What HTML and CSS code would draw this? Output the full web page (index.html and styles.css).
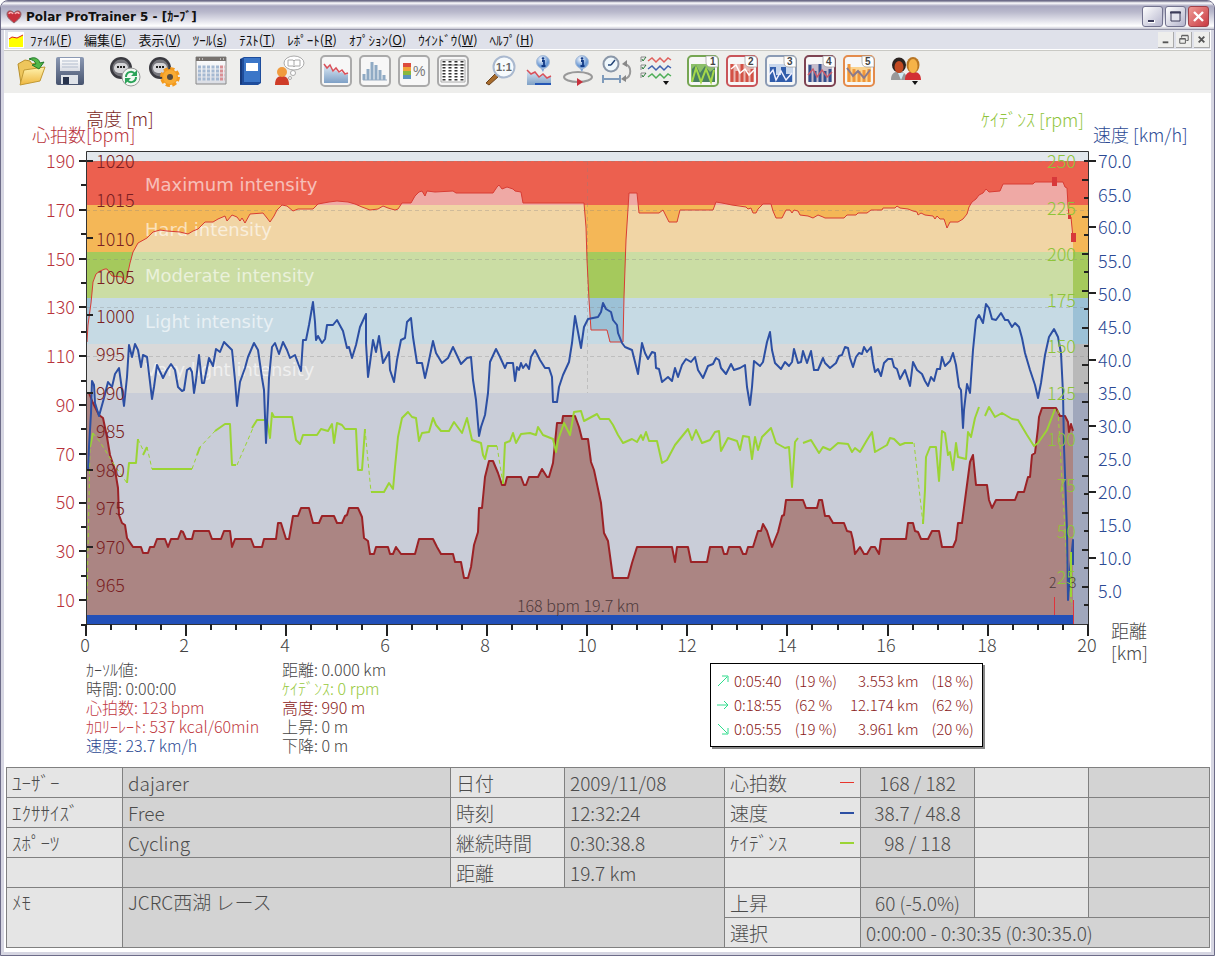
FILE: index.html
```html
<!DOCTYPE html>
<html lang="ja">
<head>
    <meta charset="UTF-8">
    <meta name="viewport" content="width=device-width, initial-scale=1.0">
    <title>Polar ProTrainer 5 - [ｶｰﾌﾞ]</title>
    <link rel="stylesheet" href="styles.css">
</head>
<body>
    <div class="window">
        <!-- Title bar -->
        <header class="titlebar">
            <svg class="app-icon" viewBox="0 0 16 16"><path d="M8 14C3 10 1 8 1 5c0-4 5-4 7-1 2-3 7-3 7 1 0 3-2 5-7 9z" fill="#c8303c" stroke="#8e6a70"/><path d="M3 5c0-2 3-2 4 0M9 5c1-2 4-2 4 0" fill="none" stroke="#f6b0b4" stroke-width="1.5"/></svg>
            <h1>Polar ProTrainer 5 - [ｶｰﾌﾞ]</h1>
            <div class="caption-buttons">
                <button type="button" aria-label="Minimize"><svg viewBox="0 0 19 19"><path d="M5 13h7v3H5z" fill="#fff"/><path d="M5 13h6v2H5z" fill="#3c3c5a"/></svg></button>
                <button type="button" aria-label="Maximize"><svg viewBox="0 0 19 19"><path d="M5 5h9v9H5z" fill="#e4e4ee" stroke="#3c3c5a"/><path d="M4 5.5h11" stroke="#3c3c5a" stroke-width="2"/></svg></button>
                <button type="button" class="close" aria-label="Close"><svg viewBox="0 0 19 19"><path d="M5 5l9 9M14 5l-9 9" stroke="#fff" stroke-width="2.4"/></svg></button>
            </div>
        </header>

        <!-- Menu -->
        <nav class="menubar">
            <svg class="doc-icon" viewBox="0 0 16 16"><path d="M0 0h16v16H0z" fill="#fff"/><path d="M1 7l3-2 5 1 6-3v12H1z" fill="#ff0"/><path d="M1 7l3-2 5 1 6-3" fill="none" stroke="#d22"/></svg>
            <button type="button">ﾌｧｲﾙ(<u>F</u>)</button>
            <button type="button">編集(<u>E</u>)</button>
            <button type="button">表示(<u>V</u>)</button>
            <button type="button">ﾂｰﾙ(<u>s</u>)</button>
            <button type="button">ﾃｽﾄ(<u>T</u>)</button>
            <button type="button">ﾚﾎﾟｰﾄ(<u>R</u>)</button>
            <button type="button">ｵﾌﾟｼｮﾝ(<u>O</u>)</button>
            <button type="button">ｳｲﾝﾄﾞｳ(<u>W</u>)</button>
            <button type="button">ﾍﾙﾌﾟ(<u>H</u>)</button>
            <div class="mdi-buttons">
                <button type="button" aria-label="Minimize document"><svg viewBox="0 0 16 16"><path d="M5 11h6" stroke="#555" stroke-width="2"/></svg></button>
                <button type="button" aria-label="Restore document"><svg viewBox="0 0 16 16"><path d="M6 6V4h7v5h-2M6 3.5h7M4 7h6v5H4zM4 7.5h6" fill="none" stroke="#555"/></svg></button>
                <button type="button" aria-label="Close document"><svg viewBox="0 0 16 16"><path d="M5 5l6 6M11 5l-6 6" stroke="#555" stroke-width="2"/></svg></button>
            </div>
        </nav>

        <!-- Toolbar -->
        <div class="toolbar">
            <svg class="defs" aria-hidden="true">
                <defs>
                    <linearGradient id="folder" x2="0" y2="1"><stop stop-color="#fff3b0"/><stop offset="1" stop-color="#eeb63e"/></linearGradient>
                    <linearGradient id="steel" x2="0" y2="1"><stop stop-color="#8c9ab4"/><stop offset="1" stop-color="#46536e"/></linearGradient>
                    <linearGradient id="paper" x2="0" y2="1"><stop stop-color="#fff"/><stop offset="1" stop-color="#dadde4"/></linearGradient>
                    <linearGradient id="sea" x2="0" y2="1"><stop stop-color="#dce9f4"/><stop offset="1" stop-color="#7ea0c6"/></linearGradient>
                    <radialGradient id="ball" cx=".4" cy=".3"><stop stop-color="#fff"/><stop offset="1" stop-color="#6d9bd6"/></radialGradient>
                    <g id="watch"><circle cx="12" cy="13" r="11" fill="#3a3a40"/><circle cx="12" cy="13" r="8.500" fill="#77777d"/><rect x="5" y="8" width="14" height="10" rx="5" fill="#d5d5d8"/><path d="M8 12h2m1 0h2m1 0h2" stroke="#222" stroke-width="2"/></g>
                    <g id="info"><path d="M14 12l3 5 2-5z" fill="#7ba3d8"/><circle cx="17" cy="7" r="6.500" fill="url(#ball)" stroke="#a9bcd6"/><path d="M16 6h2v5M15.500 11h4" fill="none" stroke="#123a86" stroke-width="1.800"/><circle cx="17" cy="3.500" r="1.300" fill="#123a86"/></g>
                    <path id="corner" d="M19 1h8q4 0 4 4v7h-7q-5 0-5-5z" fill="#fff" stroke="#999" stroke-width=".7"/>
                    <path id="drop" d="M0 0h6L3 4z" fill="#111"/>
                </defs>
            </svg>
            <div class="group">
                <button type="button" aria-label="Open"><svg viewBox="0 0 32 32"><path d="M3 9l7-4 5 1 2 3 7-2 1 18-19 4z" fill="#eec65c" stroke="#b8902c"/><path d="M9 15l21-3-5 14-20 4z" fill="url(#folder)" stroke="#c29a35"/><path d="M14 4c6-3 10 0 11 4l4-1-5 7-7-4 4-1c-1-3-3-4-7-5z" fill="#52b848" stroke="#247a2c"/></svg></button>
                <button type="button" aria-label="Save"><svg viewBox="0 0 32 32"><rect x="2" y="2" width="28" height="28" rx="2" fill="url(#steel)"/><path d="M6 3h20v13H6z" fill="url(#paper)"/><path d="M8 6h16M8 9h16M8 12h16" stroke="#b2bccd"/><path d="M7 20h17v9H7z" fill="#dfe3e9"/><path d="M9 22h6v7H9z" fill="#27334c"/></svg></button>
            </div>
            <div class="group wide">
                <button type="button" aria-label="Transfer data"><svg viewBox="0 0 32 32"><use href="#watch"/><circle cx="22" cy="22" r="9" fill="#f2f8f2" stroke="#999"/><path d="M17 22c0-5 6-7 9-3M27 22c0 5-6 7-9 3" fill="none" stroke="#2ba359" stroke-width="2"/><path d="M28 15v6h-6zM16 29v-6h6z" fill="#2ba359"/></svg></button>
                <button type="button" aria-label="Device settings"><svg viewBox="0 0 32 32"><use href="#watch"/><circle cx="22" cy="22" r="8" fill="#f39a1e" stroke="#f39a1e" stroke-width="4" stroke-dasharray="4 2.280"/><circle cx="22" cy="22" r="7" fill="#f8ab34"/><circle cx="22" cy="22" r="3" fill="#554a3e"/></svg></button>
            </div>
            <div class="group">
                <button type="button" aria-label="Diary"><svg viewBox="0 0 32 32"><path d="M1 2h30v27H1z" fill="url(#paper)" stroke="#888"/><path d="M1 2h30v4H1z" fill="#77726e"/><path d="M4 4h1m2 0h1m17 0h1m2 0h1" stroke="#fff"/><g stroke-width="3" stroke-dasharray="3 1.500"><path d="M3 12h21M3 16h21M3 20h21M3 24h21" stroke="#a5b9d2"/><path d="M25 12h5M25 16h5M25 20h5M25 24h5" stroke="#d98f94"/></g></svg></button>
                <button type="button" aria-label="Exercises"><svg viewBox="0 0 32 32"><path d="M6 4l4-2h17v26l-3 2H6z" fill="#1e4d9c"/><path d="M10 3h16v24H10z" fill="#3b76c8"/><path d="M7 4v25" stroke="#173a7c" stroke-width="2"/><path d="M12 8h12v8H12z" fill="#fff"/></svg></button>
                <button type="button" aria-label="Person"><svg viewBox="0 0 32 32"><path d="M2 30c0-7 3-9 7-9s7 2 7 9z" fill="#cf3c28"/><circle cx="9" cy="17" r="5" fill="#f09b3e"/><ellipse cx="21" cy="8" rx="10" ry="7" fill="#fff" stroke="#aaa"/><path d="M15 5h5l1 1 1-1h5v6h-5l-1 1-1-1h-5zM21 6v6" fill="none" stroke="#aaa"/><circle cx="20" cy="18" r="2.500" fill="#fff" stroke="#aaa"/><circle cx="17" cy="23" r="1.500" fill="#fff" stroke="#aaa"/></svg></button>
            </div>
            <div class="group framed">
                <button type="button" aria-label="Curve"><svg viewBox="0 0 32 32"><path d="M4 10l3 3 3-2 3 6 3-2 3 3 3-1 3 3 3-1v9H4z" fill="url(#sea)"/><path d="M4 9l3 4 3-3 3 6 3-3 3 4 3-2 3 4 3-1" fill="none" stroke="#d9505a" stroke-width="1.500"/></svg></button>
                <button type="button" aria-label="Bars"><svg viewBox="0 0 32 32"><path d="M4 25h24" stroke="#9aabc0"/><path d="M5 25v-6M9 25V14M13 25V7M17 25V10M21 25V15M25 25v-5" stroke="#8faac4" stroke-width="3"/></svg></button>
                <button type="button" aria-label="Distribution"><svg viewBox="0 0 32 32"><path d="M5 8h8v4H5z" fill="#dc4b3d"/><path d="M5 12h8v4H5z" fill="#f0a339"/><path d="M5 16h8v4H5z" fill="#88b83f"/><path d="M5 20h8v4H5z" fill="#5a93be"/><text class="percent" x="15" y="21">%</text></svg></button>
                <button type="button" aria-label="List"><svg viewBox="0 0 32 32"><path d="M4 5h24v22H4z" fill="#fff" stroke="#aaa"/><path d="M4 10h24" stroke="#888"/><path d="M7 6v21M13 6v21M19 6v21M25 6v21" stroke="#333" stroke-width="3" stroke-dasharray="1.500 1.500"/></svg></button>
            </div>
            <div class="group">
                <button type="button" aria-label="Zoom 1:1"><svg viewBox="0 0 32 32"><path d="M2 28l9-9 3 3-9 8z" fill="#a86c2c" stroke="#6d421a"/><circle cx="20" cy="12" r="10.500" fill="#f7fbfd" stroke="#aab9cf" stroke-width="2"/><text x="12" y="16" font-size="11" fill="#666">1:1</text></svg></button>
                <button type="button" aria-label="Curve information"><svg viewBox="0 0 32 32"><path d="M4 15l4 4 4-2 4 5 4-3 4 4 4-2v9H4z" fill="url(#sea)"/><path d="M4 15l4 4 4-2 4 5 4-3 4 4 4-2" fill="none" stroke="#d9505a" stroke-width="1.500"/><path d="M12 29h16" stroke="#2456b5" stroke-width="2"/><use href="#info" x="3"/></svg></button>
                <button type="button" aria-label="Lap information"><svg viewBox="0 0 32 32"><ellipse cx="16" cy="22" rx="14" ry="5" fill="none" stroke="#999" stroke-width="2"/><path d="M15 23l6 4-6 4z" fill="#c8303c"/><use href="#info" x="3"/></svg></button>
                <button type="button" aria-label="Time or distance"><svg viewBox="0 0 32 32"><circle cx="10" cy="9" r="7.500" fill="#eef7fc" stroke="#8a97a8" stroke-width="2"/><path d="M10 10l4-5M10 10H7" stroke="#247" stroke-width="1.500"/><path d="M2 24h17M2 20v8M19 20v8" stroke="#7f9bbb" stroke-width="2"/><path d="M24 9c7 2 7 12 0 15" fill="none" stroke="#999" stroke-width="2"/><path d="M26 5v7l-5-3zM25 20v7l-5-3z" fill="#888"/></svg></button>
                <button type="button" aria-label="Select curves"><svg viewBox="0 0 32 32"><g fill="none"><path d="M8 6l4-3 4 4 4-4 4 4 4-4 3 2" stroke="#e0605c" stroke-width="1.500"/><path d="M8 14l4-3 4 4 4-4 4 4 4-4 3 2" stroke="#3f62ae" stroke-width="1.500"/><path d="M8 22l4-3 4 4 4-4 4 4 4-4 3 2" stroke="#4eae58" stroke-width="1.500"/><path d="M1 2h5M1 2v5M1 10h5M1 10v5M1 18h5M1 18v5" stroke="#888"/><path d="M2 4l1 2 3-4M2 12l1 2 3-4M2 20l1 2 3-4" stroke="#2a7a3a"/></g><use href="#drop" x="23" y="26"/></svg></button>
            </div>
            <div class="group presets">
                <button type="button" class="p1" aria-label="View 1"><svg viewBox="0 0 32 32"><path d="M4 9h24v18H4z" fill="#8cbf6a"/><path d="M5 27V14l4-4 4 8 5-7 5 6 5-4v14" fill="#4a7f62"/><path d="M5 27l4-14 5 14 5-13 5 13 3-12" fill="none" stroke="#a5d84a" stroke-width="2"/><use href="#corner"/><text x="23" y="10" font-size="10" fill="#444">1</text></svg></button>
                <button type="button" class="p2" aria-label="View 2"><svg viewBox="0 0 32 32"><path d="M4 9h24v18H4z" fill="#e8b6b0"/><path d="M6 27V9M11 27V16M16 27V9M21 27V16M26 27V14" stroke="#d35145" stroke-width="3"/><path d="M5 14l5-4 4 8 5-4 4 6 5-5" fill="none" stroke="#fff" stroke-width="1.500"/><use href="#corner"/><text x="22" y="10" font-size="10" fill="#444">2</text></svg></button>
                <button type="button" class="p3" aria-label="View 3"><svg viewBox="0 0 32 32"><path d="M4 9h24v18H4z" fill="#c7d6ec"/><path d="M5 27V12h6v8h5v-8h5v7h6v8z" fill="#315dab"/><path d="M4 20l4-5 3 10 5-9 5 9 6-7" fill="none" stroke="#eef" stroke-width="1.500"/><use href="#corner"/><text x="22" y="10" font-size="10" fill="#444">3</text></svg></button>
                <button type="button" class="p4" aria-label="View 4"><svg viewBox="0 0 32 32"><path d="M4 9h24v18H4z" fill="#c4bccb"/><path d="M6 27V10M11 27V16M16 27V9M21 27V16M26 27V14" stroke="#34518f" stroke-width="3"/><path d="M4 20l5-6 4 8 5-7 5 7 5-5" fill="none" stroke="#c95b6a" stroke-width="1.500"/><use href="#corner"/><text x="22" y="10" font-size="10" fill="#444">4</text></svg></button>
                <button type="button" class="p5" aria-label="View 5"><svg viewBox="0 0 32 32"><path d="M4 12h24v15H4z" fill="#fbd38f"/><path d="M6 27V9M11 27V14M16 27V16M21 27V15M26 27V14" stroke="#f0963a" stroke-width="3"/><path d="M4 13l6 8 5-5 6 7 6-8" fill="none" stroke="#8a7a8c" stroke-width="2"/><use href="#corner"/><text x="22" y="10" font-size="10" fill="#444">5</text></svg></button>
            </div>
            <div class="group">
                <button type="button" aria-label="Persons"><svg viewBox="0 0 32 32"><path d="M1 25c0-7 4-9 9-8 5 0 7 3 7 8z" fill="#999"/><path d="M8 18l3 7 3-7z" fill="#cfeaf5"/><ellipse cx="9" cy="10" rx="7" ry="7.500" fill="#2b2320"/><ellipse cx="9" cy="12" rx="4.500" ry="6" fill="#c24a22"/><path d="M15 25c0-7 4-9 9-8 5 0 7 3 7 8z" fill="#d22f33"/><ellipse cx="23" cy="10" rx="6.500" ry="8" fill="#b87624"/><ellipse cx="23" cy="11" rx="4.500" ry="7" fill="#f6b348"/><use href="#drop" x="22" y="26"/></svg></button>
            </div>
        </div>

        <main>
            <!-- Curve chart: x 86..1088 is 0..20 km -->
            <svg class="chart" viewBox="4 93 1207 567" role="img" aria-label="Heart rate, speed, cadence and altitude by distance">
                <defs>
                    <clipPath id="under-hr"><path d="M87 624V342L88 325 91 303 93 282 96 274 100 271 105 269 107 269 112 276 122 277 125 283 127 277 130 263 133 252 138 243 147 238 153 232 160 230 167 231 180 232 188 234 193 231 198 229 205 222 213 222 218 219 225 216 227 221 232 215 237 217 240 221 242 218 245 223 250 214 263 213 267 218 270 222 274 216 277 210 282 205 287 206 293 211 298 209 313 209 318 204 329 202 337 201 348 202 355 204 362 207 370 210 378 209 383 206 388 208 395 210 398 209 402 203 411 203 415 196 419 192 422 191 425 196 427 191 435 192 453 191 456 193 493 193 497 187 499 185 502 189 507 187 513 189 515 191 521 192 523 203 584 203 586 227 587 260 589 300 591 330 607 330 610 342 623 342 624 297 626 240 629 193 637 193 639 213 659 213 663 210 669 222 677 222 680 210 713 210 716 202 722 203 732 205 746 207 748 209 751 208 753 213 756 213 758 209 763 204 771 204 773 211 776 218 782 218 786 210 790 210 792 213 794 210 798 211 800 215 808 216 813 218 818 215 823 217 825 218 844 218 847 215 856 215 858 213 867 213 871 210 882 210 883 208 895 208 897 206 900 208 908 209 913 211 917 212 918 215 921 213 925 215 933 216 935 219 937 216 940 219 944 219 947 228 950 222 958 222 963 219 967 214 969 207 972 202 976 199 979 195 983 193 986 189 989 192 1000 191 1003 184 1033 184 1035 182 1063 182 1065 187 1067 188 1068 205 1069 217 1071 217 1073 238V624z"/></clipPath>
                </defs>

                <!-- Intensity zones -->
                <path d="M86 151h1002v10H86z" fill="#e2e7ec"/>
                <path d="M86 161h1002v44H86z" fill="#ec604f"/>
                <path d="M86 205h1002v47H86z" fill="#f4b757"/>
                <path d="M86 252h1002v46H86z" fill="#a5c95c"/>
                <path d="M86 298h1002v46H86z" fill="#9cc1d6"/>
                <path d="M86 344h1002v49H86z" fill="#b9b9b9"/>
                <path d="M86 393h1002v231H86z" fill="#a0a7bc"/>
                <g clip-path="url(#under-hr)">
                    <path d="M86 161h988v44H86z" fill="#efa9a5"/>
                    <path d="M86 205h988v47H86z" fill="#f1d5a5"/>
                    <path d="M86 252h988v46H86z" fill="#cbdda4"/>
                    <path d="M86 298h988v46H86z" fill="#c6dae4"/>
                    <path d="M86 344h988v49H86z" fill="#d9d9d9"/>
                    <path d="M86 393h988v231H86z" fill="#c9cdd8"/>
                </g>
                <path class="grid" d="M86 161.500h1002M86 210.500h1002M86 259.500h1002M86 307.500h1002M86 356.500h1002M587.500 161v232"/>
                <g class="zone-names">
                    <text x="145" y="191">Maximum intensity</text>
                    <text x="145" y="236">Hard intensity</text>
                    <text x="145" y="282">Moderate intensity</text>
                    <text x="145" y="328">Light intensity</text>
                    <text x="145" y="376">Very light intensity</text>
                </g>

                <!-- Altitude -->
                <path fill="#ab8583" d="M87 615V393L89 393 93 403 99 415 103 418 107 437 110 455 115 470 118 488 119 515 122 523 125 525 127 538 133 547 141 547 143 553 148 553 150 547 154 547 157 539 165 539 168 547 171 539 178 539 181 531 183 532 186 539 192 539 194 531 209 531 212 539 221 539 224 531 230 531 232 547 235 539 251 539 254 547 262 547 264 539 276 539 278 523 281 523 286 539 289 539 293 516 298 516 301 508 309 508 313 523 319 523 322 516 334 516 337 523 342 523 345 516 347 515 349 508 358 508 362 517 364 538 368 541 370 554 374 554 376 547 388 547 390 554 393 554 396 547 401 554 415 554 419 539 433 539 437 547 441 554 453 554 455 562 461 562 464 578 468 578 471 567 474 545 478 532 479 508 482 508 485 477 489 461 493 461 498 473 502 485 505 485 507 477 521 477 524 485 526 485 529 477 538 477 542 469 547 477 549 477 553 463 557 423 562 423 563 416 575 416 579 427 582 439 588 439 591 462 594 470 601 503 604 533 608 541 613 578 628 578 632 563 637 547 672 547 675 562 677 547 688 547 691 562 707 562 710 547 722 547 724 554 727 554 729 547 740 547 743 554 746 554 748 547 753 547 758 531 761 531 763 524 767 531 772 547 778 532 782 516 784 515 786 500 803 500 806 508 817 508 819 500 822 500 825 516 829 516 833 523 844 523 847 531 851 532 853 540 855 554 860 547 864 554 867 554 871 547 875 547 879 554 881 539 906 539 908 523 913 523 915 531 918 532 921 539 928 539 932 531 939 531 942 547 953 547 956 540 958 523 962 523 965 500 970 462 973 455 976 485 987 485 989 500 992 508 996 500 1015 500 1018 492 1024 492 1028 477 1030 477 1032 455 1035 453 1038 428 1039 417 1042 408 1056 408 1060 416 1065 416 1068 422 1069 432 1071 424 1073 431V615z"/>
                <path class="curve altitude" d="M87 393L89 393 93 403 99 415 103 418 107 437 110 455 115 470 118 488 119 515 122 523 125 525 127 538 133 547 141 547 143 553 148 553 150 547 154 547 157 539 165 539 168 547 171 539 178 539 181 531 183 532 186 539 192 539 194 531 209 531 212 539 221 539 224 531 230 531 232 547 235 539 251 539 254 547 262 547 264 539 276 539 278 523 281 523 286 539 289 539 293 516 298 516 301 508 309 508 313 523 319 523 322 516 334 516 337 523 342 523 345 516 347 515 349 508 358 508 362 517 364 538 368 541 370 554 374 554 376 547 388 547 390 554 393 554 396 547 401 554 415 554 419 539 433 539 437 547 441 554 453 554 455 562 461 562 464 578 468 578 471 567 474 545 478 532 479 508 482 508 485 477 489 461 493 461 498 473 502 485 505 485 507 477 521 477 524 485 526 485 529 477 538 477 542 469 547 477 549 477 553 463 557 423 562 423 563 416 575 416 579 427 582 439 588 439 591 462 594 470 601 503 604 533 608 541 613 578 628 578 632 563 637 547 672 547 675 562 677 547 688 547 691 562 707 562 710 547 722 547 724 554 727 554 729 547 740 547 743 554 746 554 748 547 753 547 758 531 761 531 763 524 767 531 772 547 778 532 782 516 784 515 786 500 803 500 806 508 817 508 819 500 822 500 825 516 829 516 833 523 844 523 847 531 851 532 853 540 855 554 860 547 864 554 867 554 871 547 875 547 879 554 881 539 906 539 908 523 913 523 915 531 918 532 921 539 928 539 932 531 939 531 942 547 953 547 956 540 958 523 962 523 965 500 970 462 973 455 976 485 987 485 989 500 992 508 996 500 1015 500 1018 492 1024 492 1028 477 1030 477 1032 455 1035 453 1038 428 1039 417 1042 408 1056 408 1060 416 1065 416 1068 422 1069 432 1071 424 1073 431"/>
                <path d="M87 615h986v9H87z" fill="#2250b8"/>

                <!-- Cadence -->
                <path class="curve cadence gap-line" d="M87 600L90 447M93 433L100 442 115 466 127 483M138 439L143 450M147 447L152 469M192 469L200 447 216 430M237 465L253 428M365 429L371 492M497 446L503 484M914 443L923 524M1058 410L1063 497 1068 580 1072 606"/>
                <path class="curve cadence" d="M90 447L93 433M127 483L129 463 136 463 138 439M143 455L147 447M152 469L192 469M197 455L200 447M215 431L225 424 230 424 232 465 236 465M252 428L257 420 267 420 270 438 272 413 274 417 292 417 296 440 300 444 303 435 317 435 321 429 328 431 332 424 334 443 337 423 342 425 345 429 356 429 358 470 362 470 365 429M371 492L384 492 389 483 393 489 395 467 398 437 402 418 408 412 412 417 416 418 419 441 422 433 429 432 433 418 436 425 441 431 449 431 454 422 462 433 467 418 472 440 481 443 483 455 485 459 488 446 497 446M503 484L505 443 510 441 513 433 516 443 521 434 530 433 536 435 538 427 543 435 553 439 556 452 558 440 564 423 570 435 574 412 581 411 584 421 597 414 600 419 609 419 613 425 618 435 623 443 632 439 637 442 641 435 643 440 646 432 649 441 657 441 662 463 667 460 675 445 688 429 692 440 696 430 702 443 710 440 715 432 719 431 721 451 728 438 737 441 740 450 743 436 749 437 752 459 755 437 758 450 762 437 771 428 776 443 785 448 789 447 792 487 795 442 798 438M803 443L811 440 819 453 823 447 830 450 838 443 848 444 852 452 855 448 860 452 867 440 872 432 875 452 887 445 890 438 894 439 900 445 905 443 913 443M923 524L925 490 926 457 930 447 936 447 939 481 942 431 945 433 948 455 950 452 953 470 956 443 958 457 966 459 968 432 971 437 975 418 979 407M985 416L989 407 995 417 1002 413 1012 419 1018 420 1027 435 1034 446 1038 443 1047 430 1055 409"/>

                <!-- Heart rate -->
                <path class="curve heart" d="M87 342L88 325 91 303 93 282 96 274 100 271 105 269 107 269 112 276 122 277 125 283 127 277 130 263 133 252 138 243 147 238 153 232 160 230 167 231 180 232 188 234 193 231 198 229 205 222 213 222 218 219 225 216 227 221 232 215 237 217 240 221 242 218 245 223 250 214 263 213 267 218 270 222 274 216 277 210 282 205 287 206 293 211 298 209 313 209 318 204 329 202 337 201 348 202 355 204 362 207 370 210 378 209 383 206 388 208 395 210 398 209 402 203 411 203 415 196 419 192 422 191 425 196 427 191 435 192 453 191 456 193 493 193 497 187 499 185 502 189 507 187 513 189 515 191 521 192 523 203 584 203 586 227 587 260 589 300 591 330 607 330 610 342 623 342 624 297 626 240 629 193 637 193 639 213 659 213 663 210 669 222 677 222 680 210 713 210 716 202 722 203 732 205 746 207 748 209 751 208 753 213 756 213 758 209 763 204 771 204 773 211 776 218 782 218 786 210 790 210 792 213 794 210 798 211 800 215 808 216 813 218 818 215 823 217 825 218 844 218 847 215 856 215 858 213 867 213 871 210 882 210 883 208 895 208 897 206 900 208 908 209 913 211 917 212 918 215 921 213 925 215 933 216 935 219 937 216 940 219 944 219 947 228 950 222 958 222 963 219 967 214 969 207 972 202 976 199 979 195 983 193 986 189 989 192 1000 191 1003 184 1033 184 1035 182 1063 182 1065 187 1067 188 1068 205 1069 217 1071 217 1073 238"/>
                <path d="M1052 177h5v9h-5zM1071 233h5v9h-5zM1068 215h3v4h-3z" fill="#d8383a"/>

                <!-- Speed -->
                <path class="curve speed" d="M88 470L89 447 91 413 92 381 94 385 95 403 99 416 104 398 108 382 112 387 115 374 119 368 122 390 124 406 127 377 129 345 132 357 135 344 138 350 141 367 143 355 147 357 150 382 152 399 154 387 157 365 163 378 167 370 171 364 175 370 178 387 182 391 184 390 187 370 190 368 192 372 194 393 196 380 199 355 202 383 204 383 207 368 209 358 213 366 216 349 220 352 224 342 232 350 235 380 237 406 240 382 245 368 248 357 254 343 258 350 262 378 264 390 266 443 268 403 269 378 272 347 275 343 279 354 283 342 287 350 290 358 295 355 301 371 303 340 306 340 309 325 313 302 315 322 316 340 318 336 322 343 325 339 327 325 333 325 337 320 343 331 347 348 349 347 352 358 356 345 360 327 366 314 366 343 368 377 370 363 373 340 376 352 379 336 383 363 389 352 390 370 394 382 397 360 401 340 405 338 407 322 411 318 413 337 417 363 422 363 425 378 428 365 433 341 436 353 442 363 448 358 453 347 461 364 467 358 471 357 473 380 476 400 479 436 481 427 485 415 488 393 490 362 496 349 500 357 505 368 507 363 513 363 515 381 517 367 519 370 521 363 523 368 526 364 529 369 531 357 535 350 540 360 545 368 549 368 552 377 553 402 557 402 559 387 563 375 569 362 572 343 575 316 578 332 581 348 584 327 588 319 598 317 601 312 603 303 606 309 611 312 613 320 617 325 618 333 622 343 625 347 632 350 634 358 638 374 642 343 645 353 648 359 652 352 655 353 656 368 659 369 662 382 668 377 672 381 675 368 678 377 682 365 686 359 691 362 695 357 698 370 703 378 708 366 713 364 716 358 719 360 721 368 726 374 731 364 734 370 740 368 745 365 747 387 750 405 752 387 754 361 760 366 763 362 767 342 770 332 772 350 775 363 781 369 785 362 789 366 792 362 794 349 798 363 801 362 803 351 807 363 811 351 814 370 818 370 823 358 825 363 830 368 836 363 839 356 842 355 845 347 848 348 850 358 853 367 856 357 859 353 862 354 864 347 867 352 871 347 873 362 875 372 878 369 881 376 884 363 888 359 892 359 894 367 897 369 900 379 905 370 910 386 913 362 917 370 922 374 925 381 928 386 931 377 934 381 937 369 940 369 942 357 945 366 950 361 953 353 956 365 959 387 961 390 963 428 964 410 967 384 970 393 973 350 976 320 979 315 983 323 986 304 989 308 992 319 996 320 1001 313 1005 320 1008 320 1012 327 1015 323 1019 327 1022 338 1025 353 1030 370 1035 385 1038 398 1041 383 1045 355 1049 337 1054 329 1058 337 1061 353 1063 393 1064 447 1067 530 1068 600 1070 570 1073 540V565"/>
                <path class="curve cadence" d="M1071 552V597"/>
                <path d="M1054.500 597v18M1073.500 600v24" stroke="#e0343c"/>

                <!-- Axes and ticks -->
                <path class="axis" d="M86.500 624V151.500H1088.500V624M86 624.500h1003"/>
                <g class="ticks">
                    <path d="M85 627h1005" stroke-width="6" stroke-dasharray="2 23.050"/>
                    <path d="M85 630h1005" stroke-width="11" stroke-dasharray="2 98.200"/>
                    <path d="M83.500 160v466" stroke-width="5" stroke-dasharray="2 22.400"/>
                    <path d="M82.500 160v450" stroke-width="7" stroke-dasharray="2 46.800"/>
                    <path d="M90 160v400" stroke-width="6" stroke-dasharray="2 75.200"/>
                    <path d="M1086 160v450" stroke-width="5" stroke-dasharray="2 16.500"/>
                    <path d="M1085 179v430" stroke-width="7" stroke-dasharray="2 35"/>
                    <path d="M1092 160v410" stroke-width="7" stroke-dasharray="2 64.200"/>
                </g>

                <g class="red end">
                    <text x="75" y="168">190</text><text x="75" y="217">170</text><text x="75" y="266">150</text><text x="75" y="314">130</text><text x="75" y="363">110</text><text x="75" y="412">90</text><text x="75" y="461">70</text><text x="75" y="509">50</text><text x="75" y="558">30</text><text x="75" y="607">10</text>
                </g>
                <g class="maroon">
                    <text x="96" y="168">1020</text><text x="96" y="207">1015</text><text x="96" y="246">1010</text><text x="96" y="284">1005</text><text x="96" y="323">1000</text><text x="96" y="361">995</text><text x="96" y="400">990</text><text x="96" y="438">985</text><text x="96" y="477">980</text><text x="96" y="515">975</text><text x="96" y="554">970</text><text x="96" y="592">965</text>
                </g>
                <g class="green end">
                    <text x="1076" y="168">250</text><text x="1076" y="215">225</text><text x="1076" y="261">200</text><text x="1076" y="307">175</text><text x="1076" y="353">150</text><text x="1076" y="400">125</text><text x="1076" y="446">100</text><text x="1076" y="492">75</text><text x="1076" y="538">50</text><text x="1076" y="584">25</text>
                </g>
                <g class="blue">
                    <text x="1098" y="168">70.0</text><text x="1098" y="202">65.0</text><text x="1098" y="234">60.0</text><text x="1098" y="268">55.0</text><text x="1098" y="301">50.0</text><text x="1098" y="334">45.0</text><text x="1098" y="367">40.0</text><text x="1098" y="400">35.0</text><text x="1098" y="433">30.0</text><text x="1098" y="466">25.0</text><text x="1098" y="499">20.0</text><text x="1098" y="532">15.0</text><text x="1098" y="565">10.0</text><text x="1098" y="598">5.0</text>
                </g>
                <g class="dark middle">
                    <text x="85" y="652">0</text><text x="184" y="652">2</text><text x="285" y="652">4</text><text x="385" y="652">6</text><text x="485" y="652">8</text><text x="587" y="652">10</text><text x="687" y="652">12</text><text x="787" y="652">14</text><text x="886" y="652">16</text><text x="987" y="652">18</text><text x="1087" y="652">20</text>
                </g>
                <text class="maroon" x="86" y="126">高度 [m]</text>
                <text class="red" x="32" y="142">心拍数[bpm]</text>
                <text class="green end" x="1084" y="127">ｹｲﾃﾞﾝｽ [rpm]</text>
                <text class="blue" x="1093" y="142">速度 [km/h]</text>
                <text class="dark" x="1111" y="638">距離</text>
                <text class="dark" x="1111" y="660">[km]</text>
                <text class="note" x="517" y="612">168 bpm 19.7 km</text>
                <text class="lap" x="1049" y="588">2</text>
                <text class="lap" x="1069" y="588">3</text>
            </svg>

            <!-- Cursor values and slope summary -->
            <section class="readouts">
                <div class="cursor-values">
                    <p>ｶｰｿﾙ値:</p>
                    <p>時間: 0:00:00</p>
                    <p class="red">心拍数: 123 bpm</p>
                    <p class="red">ｶﾛﾘｰﾚｰﾄ: 537 kcal/60min</p>
                    <p class="blue">速度: 23.7 km/h</p>
                </div>
                <div class="cursor-values">
                    <p>距離: 0.000 km</p>
                    <p class="green">ｹｲﾃﾞﾝｽ: 0 rpm</p>
                    <p class="maroon">高度: 990 m</p>
                    <p>上昇: 0 m</p>
                    <p>下降: 0 m</p>
                </div>
                <table class="slopes">
                    <tr><th><svg viewBox="0 0 12 12"><path d="M1 11L10 2M5 1h6v6"/></svg></th><td>0:05:40</td><td>(19 %)</td><td class="num">3.553 km</td><td>(18 %)</td></tr>
                    <tr><th><svg viewBox="0 0 12 12"><path d="M0 6h11M7 2l4 4-4 4"/></svg></th><td>0:18:55</td><td>(62 %</td><td class="num">12.174 km</td><td>(62 %)</td></tr>
                    <tr><th><svg viewBox="0 0 12 12"><path d="M1 1l9 9M11 5v6H5"/></svg></th><td>0:05:55</td><td>(19 %)</td><td class="num">3.961 km</td><td>(20 %)</td></tr>
                </table>
            </section>

            <!-- Exercise details -->
            <table class="details">
                <colgroup>
                    <col class="c1"><col class="c2"><col class="c3"><col class="c4"><col class="c5"><col class="c6"><col class="c7"><col class="c8">
                </colgroup>
                <tr><th>ﾕｰｻﾞｰ</th><td>dajarer</td><th>日付</th><td>2009/11/08</td><th>心拍数<i class="key hr"></i></th><td class="center">168 / 182</td><th></th><td></td></tr>
                <tr><th>ｴｸｻｻｲｽﾞ</th><td>Free</td><th>時刻</th><td>12:32:24</td><th>速度<i class="key sp"></i></th><td class="center">38.7 / 48.8</td><th></th><td></td></tr>
                <tr><th>ｽﾎﾟｰﾂ</th><td>Cycling</td><th>継続時間</th><td>0:30:38.8</td><th>ｹｲﾃﾞﾝｽ<i class="key cad"></i></th><td class="center">98 / 118</td><th></th><td></td></tr>
                <tr><th></th><td></td><th>距離</th><td>19.7 km</td><th></th><td></td><th></th><td></td></tr>
                <tr><th rowspan="2" class="top">ﾒﾓ</th><td rowspan="2" colspan="3" class="top">JCRC西湖 レース</td><th>上昇</th><td class="center">60 (-5.0%)</td><th></th><td></td></tr>
                <tr><th>選択</th><td colspan="3">0:00:00 - 0:30:35 (0:30:35.0)</td></tr>
            </table>
        </main>
    </div>
</body>
</html>
```
FILE: styles.css
```css
* {
    box-sizing: border-box;
}

body {
    margin: 0;
    background: #fff;
    font-family: "Noto Sans CJK JP", sans-serif;
    font-weight: 300;
    color: #444;
}

button {
    padding: 0;
    border: 0;
    background: none;
    font: inherit;
    color: inherit;
}

svg {
    display: block;
}

/* Window frame */
.window {
    display: flex;
    flex-direction: column;
    min-height: 100vh;
    padding: 0 3px 3px;
    border: 1px solid #6d6c88;
    border-radius: 8px 8px 0 0;
    background: #d6d6e2;
}

.titlebar {
    display: flex;
    align-items: center;
    gap: 4px;
    height: 29px;
    margin: 0 -3px;
    padding: 2px 5px 0;
    border-radius: 7px 7px 0 0;
    background: linear-gradient(#76758f 0, #fff 2px, #a9a8c0 5px, #b9b9cc 11px, #e4e4ec 20px, #fff 25px, #c3c3d0 28px, #63637c 29px);
}

.app-icon {
    width: 16px;
    height: 16px;
}

.titlebar h1 {
    margin: 0;
    font-family: "DejaVu Sans", "Noto Sans CJK JP", sans-serif;
    font-size: 12px;
    line-height: 20px;
    font-weight: 700;
    color: #111;
}

.caption-buttons {
    display: flex;
    gap: 2px;
    margin-left: auto;
}

.caption-buttons button {
    width: 21px;
    height: 21px;
    border: 1px solid #73738f;
    border-radius: 3px;
    background: linear-gradient(135deg, #fff, #b4b4cc);
}

.caption-buttons .close {
    border-color: #a04048;
    background: linear-gradient(135deg, #ee9a94, #c93a42);
}

/* Menu */
.menubar {
    display: flex;
    align-items: center;
    height: 20px;
    padding-left: 3px;
    border: 1px solid #fff;
    border-top: 0;
    background: #dfe1ea;
    font-size: 13px;
    line-height: 16px;
    font-weight: 400;
    color: #111;
}

.doc-icon {
    width: 16px;
    height: 16px;
}

.menubar button {
    padding: 0 6px;
}

.mdi-buttons {
    display: flex;
    gap: 2px;
    margin-left: auto;
}

.mdi-buttons button {
    width: 16px;
    height: 16px;
    padding: 0;
    background: #eeeeec;
    border-right: 1px solid #aaa;
    border-bottom: 1px solid #aaa;
}

/* Toolbar */
.toolbar {
    display: flex;
    align-items: center;
    gap: 15px;
    height: 43px;
    padding: 0 0 3px 11px;
    border-top: 1px solid #c9c9c4;
    background: #eeeeec;
}

.toolbar .defs {
    position: absolute;
    width: 0;
    height: 0;
}

.toolbar text {
    font-family: "Liberation Sans", sans-serif;
    font-weight: 700;
}

.toolbar .percent {
    font-size: 14px;
    font-weight: 400;
    fill: #777;
}

.group {
    display: flex;
    gap: 7px;
}

.group.wide {
    margin-left: 8px;
}

.group button {
    width: 32px;
    height: 32px;
}

.framed button,
.presets button {
    border: 2px solid #aaa;
    border-radius: 5px;
    background: #f7f7f7;
}

/* the drawing runs under the 2px frame */
.framed svg,
.presets svg {
    width: 32px;
    height: 32px;
    margin: -2px;
}

.presets .p1 { border-color: #76a653; }
.presets .p2 { border-color: #c95459; }
.presets .p3 { border-color: #8b9bb5; }
.presets .p4 { border-color: #7e4352; }
.presets .p5 { border-color: #e48b4b; }

/* Work area */
main {
    flex: 1;
    background: #fff;
}

.chart {
    width: 100%;
    height: auto;
    overflow: visible;
}

.chart text {
    font-size: 18px;
}

.chart .zone-names text {
    font-family: "DejaVu Sans", sans-serif;
    font-weight: 400;
    fill: #fff;
    opacity: 0.6;
}

.chart .note {
    font-size: 16px;
    fill: #4e3a3c;
}

.chart .lap {
    font-size: 14px;
    fill: #4e3a3c;
}

.grid {
    fill: none;
    stroke: #808080;
    stroke-opacity: 0.3;
    stroke-dasharray: 4 3;
}

.curve {
    fill: none;
    stroke-width: 2;
    stroke-linejoin: round;
}

.curve.heart {
    stroke: #d83c34;
    stroke-width: 1;
}

.curve.altitude { stroke: #9b2226; }
.curve.speed { stroke: #2c4fa3; }
.curve.cadence { stroke: #9bd435; }

.curve.gap-line {
    stroke-width: 1;
    stroke-dasharray: 4 3;
}

.axis {
    fill: none;
    stroke: #333;
}

.ticks {
    stroke: #222;
    shape-rendering: crispEdges;
}

.red { color: #c0393f; fill: #b8333c; }
.maroon { color: #8a2020; fill: #7a1e22; }
.green { color: #97c93c; fill: #8fc43a; }
.blue { color: #2c4a94; fill: #2c4a94; }
.dark { fill: #444; }
.end { text-anchor: end; }
.middle { text-anchor: middle; }

.readouts {
    display: grid;
    grid-template-columns: 196px 428px auto;
    justify-content: start;
    padding: 0 8px 12px 82px;
}

.cursor-values p {
    margin: 0;
    font-size: 16px;
    line-height: 19px;
    white-space: nowrap;
}

.slopes {
    align-self: start;
    margin-top: 3px;
    border: 1px solid #000;
    border-collapse: separate;
    border-spacing: 0;
    padding: 5px 4px;
    box-shadow: 2px 2px 0 #888;
    font-size: 15px;
    line-height: 24px;
    color: #8a2020;
}

.slopes th,
.slopes td {
    padding: 0 10px 0 3px;
    white-space: nowrap;
}

.slopes th {
    padding: 0 2px;
}

.slopes td:last-child {
    padding-right: 4px;
}

.slopes svg {
    width: 12px;
    height: 12px;
    fill: none;
    stroke: #2edc8c;
}

.num {
    text-align: right;
}

/* Exercise details */
.details {
    width: calc(100% - 3px);
    margin: 0 1px 4px 2px;
    table-layout: fixed;
    border-collapse: collapse;
    font-size: 19px;
    line-height: 28px;
    color: #4c4c4c;
}

.c1 { width: 116px; }
.c2 { width: 328px; }
.c3 { width: 114px; }
.c4 { width: 160px; }
.c5 { width: 136px; }
.c6 { width: 114px; }
.c7 { width: 114px; }

.details th,
.details td {
    height: 30px;
    padding: 0 5px;
    border: 1px solid #808080;
    font-weight: 300;
    text-align: left;
    white-space: nowrap;
}

.details th { background: #e5e5e5; }
.details td { background: #d3d3d3; }
.details .center { text-align: center; }
.details .top { vertical-align: top; }

.key {
    float: right;
    width: 14px;
    height: 2px;
    margin: 13px 1px 0 0;
}

.key.hr { height: 1px; background: #e8352c; }
.key.sp { background: #2c4fa3; }
.key.cad { background: #9bd435; }
```
